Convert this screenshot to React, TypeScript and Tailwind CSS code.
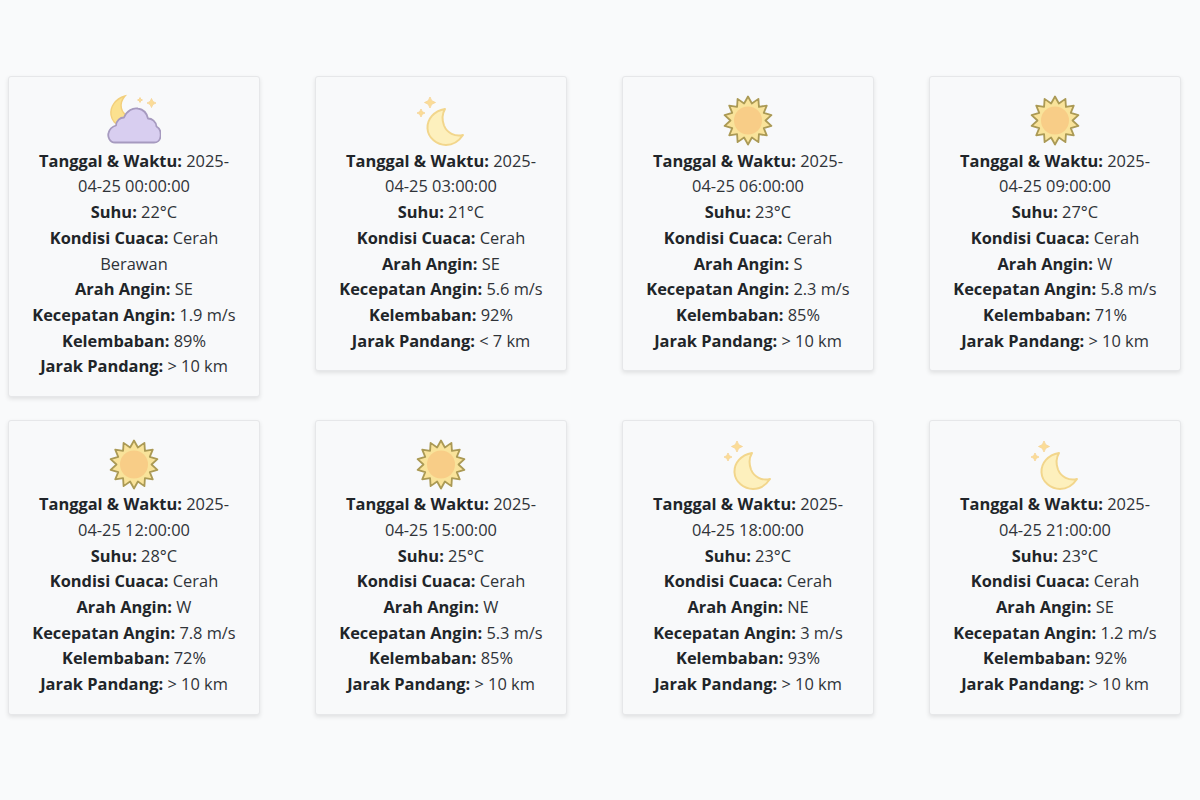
const Sun = () => (
  <svg viewBox="0 0 54 54" className="w-[54px] h-[54px]">
    <polygon
      fill="#f9e39a"
      stroke="#ab9a55"
      strokeWidth="1.8"
      strokeLinejoin="round"
      points={Array.from({ length: 28 }, (_, i) => {
        const a = (i * Math.PI) / 14 - Math.PI / 2;
        const r = i % 2 === 0 ? 24 : 17.5;
        return `${(27 + r * Math.cos(a)).toFixed(2)},${(27.5 + r * Math.sin(a)).toFixed(2)}`;
      }).join(" ")}
    />
    <circle cx="27" cy="27.5" r="14" fill="#f8cd87" />
  </svg>
);

const Star = ({ x, y, s }: { x: number; y: number; s: number }) => (
  <path
    d={`M${x} ${y - s}Q${x + s * 0.15} ${y - s * 0.15} ${x + s} ${y}Q${x + s * 0.15} ${y + s * 0.15} ${x} ${y + s}Q${x - s * 0.15} ${y + s * 0.15} ${x - s} ${y}Q${x - s * 0.15} ${y - s * 0.15} ${x} ${y - s}Z`}
    fill="#fbdc97"
    stroke="#f5cf86"
    strokeWidth="0.7"
  />
);

const Moon = () => (
  <svg viewBox="0 0 54 54" className="w-[54px] h-[54px]">
    <path
      d="M31 16C20 18 13 26 13.500 35.500C14 45 23 52 32 52C39 52 45 48 49 42C41 44 33 40 30 32.500C28 27 28 21 31 16Z"
      fill="#fdf0bd"
      stroke="#f2d68c"
      strokeWidth="2"
      strokeLinejoin="round"
    />
    <Star x={16} y={9.500} s={5.500} />
    <Star x={7} y={20} s={4} />
  </svg>
);

const CloudMoon = () => (
  <svg viewBox="0 0 54 54" className="w-[54px] h-[54px]">
    <path
      d="M18 3C8 6 3 14 4 22C5 28 9 32 13 32L22 23C14 21 11 11 18 3Z"
      fill="#fbe18f"
      stroke="#f2cf7c"
      strokeWidth="1.400"
    />
    <Star x={33} y={7} s={2.500} />
    <Star x={44.500} y={10} s={4.500} />
    <path
      d="M8 49.500C2.500 49.500 0.500 43.500 1.500 40C2.500 36 5.500 33.500 9 32.500C9.500 27.500 13 24.500 17 24.500C20 17.500 26 14.500 31 15.500C37 16.500 40 21 41 25.500C45 25.500 49 28.500 49.500 33.500C53 35.500 54 39.500 53.500 43.500C53 47.500 50 49.500 47 49.500Z"
      fill="#d8cef0"
      stroke="#a69abf"
      strokeWidth="1.800"
      strokeLinejoin="round"
    />
  </svg>
);

type D = {
  icon: "sun" | "moon" | "cloud";
  time: string;
  temp: string;
  cond: string;
  dir: string;
  speed: string;
  hum: string;
  vis: string;
};

const data: D[] = [
  { icon: "cloud", time: "2025-04-25 00:00:00", temp: "22°C", cond: "Cerah Berawan", dir: "SE", speed: "1.9 m/s", hum: "89%", vis: "> 10 km" },
  { icon: "moon", time: "2025-04-25 03:00:00", temp: "21°C", cond: "Cerah", dir: "SE", speed: "5.6 m/s", hum: "92%", vis: "< 7 km" },
  { icon: "sun", time: "2025-04-25 06:00:00", temp: "23°C", cond: "Cerah", dir: "S", speed: "2.3 m/s", hum: "85%", vis: "> 10 km" },
  { icon: "sun", time: "2025-04-25 09:00:00", temp: "27°C", cond: "Cerah", dir: "W", speed: "5.8 m/s", hum: "71%", vis: "> 10 km" },
  { icon: "sun", time: "2025-04-25 12:00:00", temp: "28°C", cond: "Cerah", dir: "W", speed: "7.8 m/s", hum: "72%", vis: "> 10 km" },
  { icon: "sun", time: "2025-04-25 15:00:00", temp: "25°C", cond: "Cerah", dir: "W", speed: "5.3 m/s", hum: "85%", vis: "> 10 km" },
  { icon: "moon", time: "2025-04-25 18:00:00", temp: "23°C", cond: "Cerah", dir: "NE", speed: "3 m/s", hum: "93%", vis: "> 10 km" },
  { icon: "moon", time: "2025-04-25 21:00:00", temp: "23°C", cond: "Cerah", dir: "SE", speed: "1.2 m/s", hum: "92%", vis: "> 10 km" },
];

const Row = ({ label, value }: { label: string; value: string }) => (
  <p>
    <strong className="font-bold text-[#212529]">{label}:</strong> {value}
  </p>
);

const Card = ({ d }: { d: D }) => (
  <div className="w-[252px] rounded-[3px] border border-[#e6e7e9] bg-[#f8f9fa] pt-[16px] pb-[17px] px-[22px] text-center shadow-[0_2px_4px_rgba(0,0,0,0.1)]">
    <div className="flex justify-center h-[54px] mb-[0.4px]">
      {d.icon === "sun" ? <Sun /> : d.icon === "moon" ? <Moon /> : <CloudMoon />}
    </div>
    <Row label="Tanggal & Waktu" value={d.time} />
    <Row label="Suhu" value={d.temp} />
    <Row label="Kondisi Cuaca" value={d.cond} />
    <Row label="Arah Angin" value={d.dir} />
    <Row label="Kecepatan Angin" value={d.speed} />
    <Row label="Kelembaban" value={d.hum} />
    <Row label="Jarak Pandang" value={d.vis} />
  </div>
);

export default function App() {
  return (
    <div
      className="min-h-[800px] bg-[#f9fafb] pt-[76.4px] pl-[8px] text-[16.4px] leading-[25.7px] text-[#2f3338]"
      style={{ fontFamily: '"Open Sans", "Noto Sans", sans-serif' }}
    >
      <div className="grid grid-cols-[repeat(4,252px)] gap-x-[55px] gap-y-[22.7px] items-start">
        {data.map((d) => (
          <Card key={d.time} d={d} />
        ))}
      </div>
    </div>
  );
}
